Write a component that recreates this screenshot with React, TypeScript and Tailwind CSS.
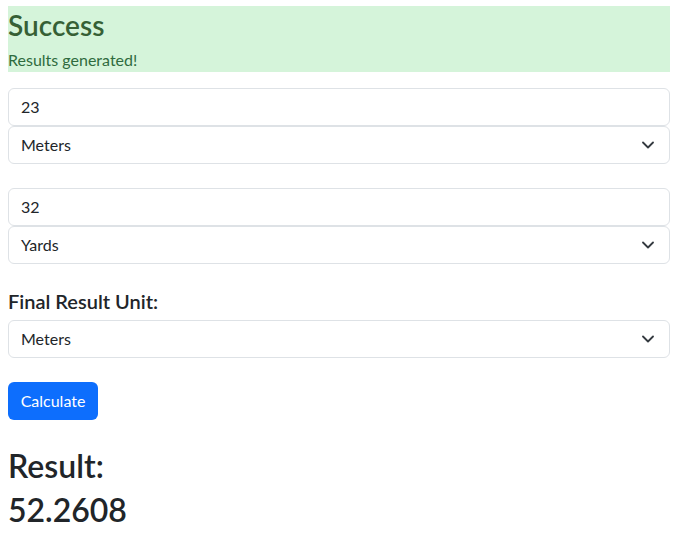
import React from "react";

const Chevron = () => (
  <svg className="absolute right-[15px] top-1/2 -translate-y-1/2" width="12" height="8" viewBox="0 0 12 8" fill="none">
    <path d="M1 1.5l5 5 5-5" stroke="#343a40" strokeWidth="1.8" strokeLinecap="round" strokeLinejoin="round" />
  </svg>
);

const Input = ({ value }: { value: string }) => (
  <div className="h-[38px] w-full border border-[#dee2e6] rounded-[6px] pl-[12px] flex items-center text-[16px] text-[#212529] bg-white">
    {value}
  </div>
);

const Select = ({ value }: { value: string }) => (
  <div className="relative h-[38px] w-full border border-[#dee2e6] rounded-[6px] pl-[12px] flex items-center text-[16px] text-[#212529] bg-white">
    {value}
    <Chevron />
  </div>
);

export default function App() {
  return (
    <div className="ml-[8px] w-[662px] pt-[6px] font-['Lato','Noto_Sans',sans-serif] text-[#212529]">
      <div className="bg-[#d5f4da] h-[66px] flex flex-col">
        <div className="text-[28px] leading-[34px] mt-[2px] text-[#365f35] font-semibold">Success</div>
        <div className="text-[16px] leading-[20px] mt-[8px] text-[#2f6b3e]">Results generated!</div>
      </div>
      <div className="mt-[16px] flex flex-col">
        <Input value="23" />
        <Select value="Meters" />
      </div>
      <div className="mt-[24px] flex flex-col">
        <Input value="32" />
        <Select value="Yards" />
      </div>
      <div className="mt-[24px] text-[20px] leading-[26px] font-semibold">Final Result Unit:</div>
      <div className="mt-[6px]">
        <Select value="Meters" />
      </div>
      <button className="mt-[24px] h-[38px] w-[90px] bg-[#0d6efd] text-white rounded-[6px] text-[16px]">Calculate</button>
      <div className="mt-[24px] text-[32px] leading-[44px] font-semibold">Result:</div>
      <div className="text-[32px] leading-[44px] font-semibold">52.2608</div>
    </div>
  );
}
